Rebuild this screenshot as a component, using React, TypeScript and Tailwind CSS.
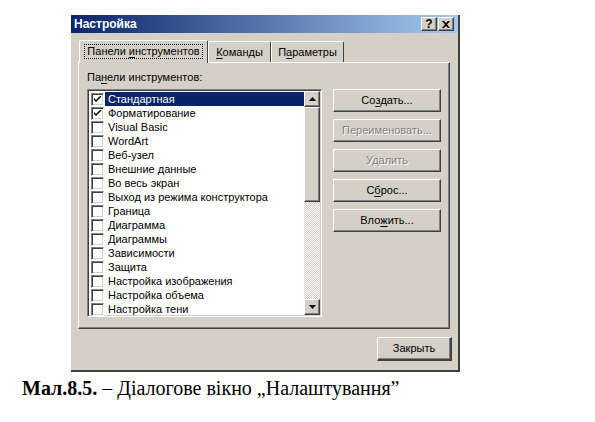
import type { ReactNode } from 'react'

const toolbars: { label: string; checked?: boolean; selected?: boolean }[] = [
  { label: 'Стандартная', checked: true, selected: true },
  { label: 'Форматирование', checked: true },
  { label: 'Visual Basic' },
  { label: 'WordArt' },
  { label: 'Веб-узел' },
  { label: 'Внешние данные' },
  { label: 'Во весь экран' },
  { label: 'Выход из режима конструктора' },
  { label: 'Граница' },
  { label: 'Диаграмма' },
  { label: 'Диаграммы' },
  { label: 'Зависимости' },
  { label: 'Защита' },
  { label: 'Настройка изображения' },
  { label: 'Настройка объема' },
  { label: 'Настройка тени' },
]

// classic raised 3D edge
const raised =
  'bg-[#d4d0c8] border border-t-white border-l-white border-r-[#404040] border-b-[#404040] shadow-[inset_-1px_-1px_0_#808080]'

function Check() {
  return (
    <svg width="7" height="7" viewBox="0 0 7 7">
      <path d="M0 2 L0 4 L2 6 L7 1 L7 -1 L2 4 Z" fill="#000" />
    </svg>
  )
}

function Row({ label, checked, selected }: { label: string; checked?: boolean; selected?: boolean }) {
  return (
    <div className="flex h-[14px] items-center">
      <div className="ml-[2px] flex h-[13px] w-[13px] shrink-0 items-center justify-center border border-t-[#808080] border-l-[#808080] border-r-white border-b-white bg-white shadow-[inset_1px_1px_0_#404040,inset_-1px_-1px_0_#d4d0c8]">
        {checked && <Check />}
      </div>
      <div
        className={
          selected
            ? 'ml-[1px] h-full flex-1 bg-[#0a246a] pl-[3px] leading-[14px] text-white'
            : 'ml-[1px] h-full flex-1 pl-[3px] leading-[14px] text-black'
        }
      >
        {label}
      </div>
    </div>
  )
}

function Arrow({ up }: { up?: boolean }) {
  return (
    <svg width="7" height="4" viewBox="0 0 7 4">
      {up ? <path d="M3.5 0 L7 4 L0 4 Z" fill="#000" /> : <path d="M0 0 L7 0 L3.5 4 Z" fill="#000" />}
    </svg>
  )
}

function Btn({ children, disabled }: { children: ReactNode; disabled?: boolean }) {
  return (
    <div
      className={`${raised} flex h-[23px] w-[108px] items-center justify-center text-[11px] ${
        disabled ? 'text-[#808080] [text-shadow:1px_1px_0_#fff]' : 'text-black'
      }`}
    >
      {children}
    </div>
  )
}

export default function App() {
  return (
    <div className="h-[422px] w-[595px] overflow-hidden bg-white pt-[15px] font-['Liberation_Sans',Arial,sans-serif] text-[11px]">
      {/* Dialog window */}
      <div className="ml-[71px] flex h-[357px] w-[389px] flex-col border-r-2 border-b-2 border-r-[#404040] border-b-[#404040] bg-[#d4d0c8]">
        {/* Title bar */}
        <div className="flex h-[18px] items-center bg-[linear-gradient(90deg,#0a246a,#a6caf0)] pl-[3px] pr-[4px]">
          <span className="flex-1 text-[12px] font-bold text-white">Настройка</span>
          <div className={`${raised} flex h-[14px] w-[16px] items-center justify-center text-[12px] font-bold leading-none`}>
            ?
          </div>
          <div className={`${raised} ml-[1px] flex h-[14px] w-[16px] items-center justify-center`}>
            <svg width="8" height="7" viewBox="0 0 8 7">
              <path d="M0 0 H2 L4 2 L6 0 H8 L5 3.5 L8 7 H6 L4 5 L2 7 H0 L3 3.5 Z" fill="#000" />
            </svg>
          </div>
        </div>

        {/* Tabs */}
        <div className="ml-[8px] mt-[7px] flex items-end">
          <div className="relative z-10 -mb-[1px] flex h-[23px] w-[129px] items-start justify-center rounded-t-[2px] border border-b-0 border-t-white border-l-white border-r-[#404040] bg-[#d4d0c8] pt-[3px]">
            <span className="border border-dotted border-black px-[2px] leading-[13px]">
              Панели <u className="underline-offset-2">и</u>нструментов
            </span>
          </div>
          <div className="flex h-[21px] w-[63px] items-start justify-center rounded-t-[2px] border border-b-0 border-t-white border-l-white border-r-[#404040] pt-[4px] leading-[13px]">
            <span>
              <u className="underline-offset-2">К</u>оманды
            </span>
          </div>
          <div className="flex h-[21px] w-[73px] items-start justify-center rounded-t-[2px] border border-b-0 border-t-white border-l-white border-r-[#404040] pt-[4px] leading-[13px]">
            <span>
              П<u className="underline-offset-2">а</u>раметры
            </span>
          </div>
        </div>

        {/* Tab panel */}
        <div className="ml-[7px] flex h-[267px] w-[372px] flex-col border border-t-white border-l-white border-r-[#404040] border-b-[#404040] shadow-[inset_-1px_-1px_0_#808080] pl-[8px] pt-[8px]">
          <div className="leading-[13px]">
            Па<u className="underline-offset-2">н</u>ели инструментов:
          </div>
          <div className="mt-[5px] flex">
            {/* List box */}
            <div className="flex h-[228px] w-[235px] border border-t-[#808080] border-l-[#808080] border-r-white border-b-white bg-white shadow-[inset_1px_1px_0_#404040,inset_-1px_-1px_0_#d4d0c8] p-[1px]">
              <div className="flex-1 pt-[1px]">
                {toolbars.map((t) => (
                  <Row key={t.label} {...t} />
                ))}
              </div>
              {/* Scrollbar */}
              <div className="flex w-[16px] flex-col">
                <div className={`${raised} flex h-[16px] items-center justify-center`}>
                  <Arrow up />
                </div>
                <div className={`${raised} h-[95px]`} />
                <div className="flex-1 bg-[repeating-conic-gradient(#d4d0c8_0_25%,#fff_0_50%)] bg-[length:2px_2px]" />
                <div className={`${raised} flex h-[16px] items-center justify-center`}>
                  <Arrow />
                </div>
              </div>
            </div>

            {/* Buttons */}
            <div className="ml-[11px] flex flex-col gap-[7px]">
              <Btn>
                Со<u className="underline-offset-2">з</u>дать...
              </Btn>
              <Btn disabled>Переименовать...</Btn>
              <Btn disabled>Удалить</Btn>
              <Btn>
                С<u className="underline-offset-2">б</u>рос...
              </Btn>
              <Btn>
                Вло<u className="underline-offset-2">ж</u>ить...
              </Btn>
            </div>
          </div>
        </div>

        {/* Footer */}
        <div className="mt-[8px] flex justify-end pr-[6px]">
          <div className="flex h-[24px] w-[75px] items-center justify-center border border-t-white border-l-white border-r-[#404040] border-b-[#404040] border-r-2 border-b-2 bg-[#d4d0c8] text-[11px] shadow-[inset_-1px_-1px_0_#808080]">
            Закрыть
          </div>
        </div>
      </div>

      {/* Caption */}
      <div className="ml-[22px] mt-[5px] font-['Liberation_Serif','Times_New_Roman',serif] text-[20px] leading-[22px] text-black">
        <b>Мал.8.5.</b> – Діалогове вікно „Налаштування”
      </div>
    </div>
  )
}
